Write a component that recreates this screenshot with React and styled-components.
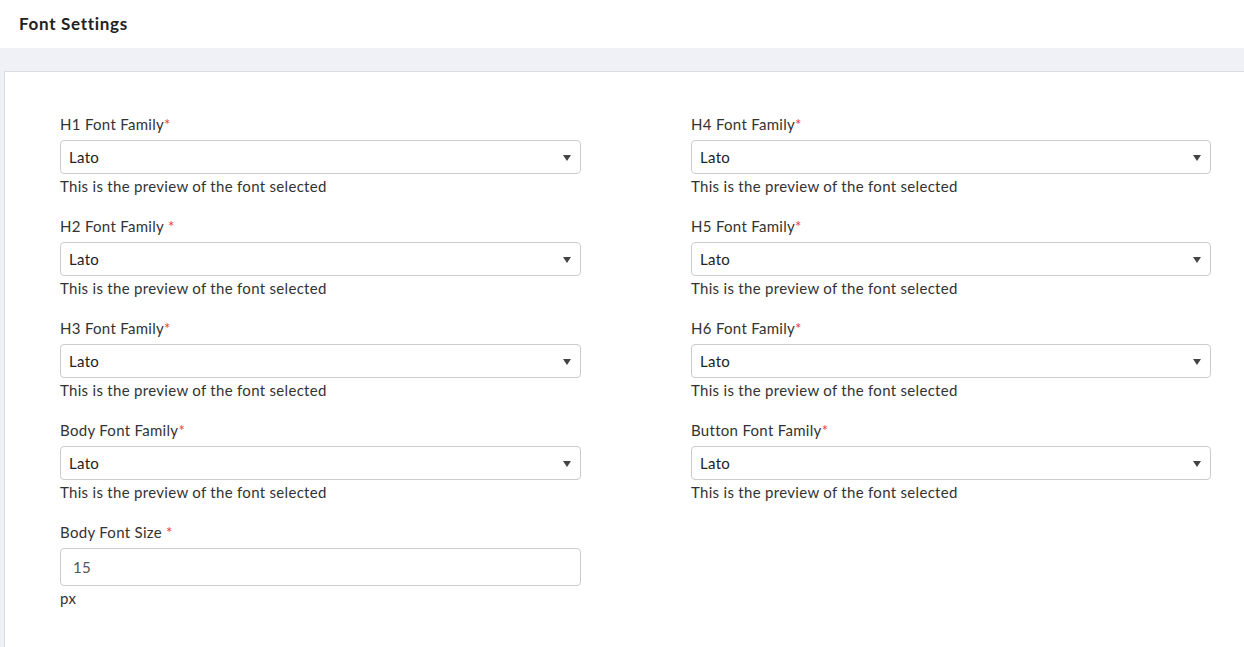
import React from "react";
import styled, { createGlobalStyle } from "styled-components";

const Global = createGlobalStyle`
  html, body { margin: 0; padding: 0; background: #f0f1f6; }
  body { font-family: Lato, "Noto Sans", sans-serif; color: #333; }
  * { box-sizing: border-box; }
`;

const Header = styled.div`
  height: 48px;
  background: #fff;
  display: flex;
  align-items: center;
  padding-left: 19px;
  padding-bottom: 2px;
`;

const Title = styled.h1`
  margin: 0;
  font-size: 17px;
  letter-spacing: 0.7px;
  font-weight: 700;
  color: #222;
`;

const Page = styled.div`
  padding: 23px 0 0 4px;
`;

const Card = styled.div`
  background: #fff;
  border: 1px solid #dcdde2;
  border-right: none;
  border-bottom: none;
  min-height: 577px;
  padding: 41px 0 30px 55px;
`;

const Grid = styled.div`
  display: grid;
  grid-template-columns: 521px 520px;
  column-gap: 110px;
  align-items: start;
`;

const Field = styled.div`
  display: flex;
  flex-direction: column;
  margin-bottom: 17px;
`;

const Label = styled.label`
  font-size: 15px;
  letter-spacing: 0.3px;
  line-height: 22px;
  margin-bottom: 5px;
  color: #333;
`;

const Req = styled.span`
  color: #e8383d;
`;

const SelectBox = styled.div`
  height: 34px;
  border: 1px solid #ccc;
  border-radius: 4px;
  display: flex;
  align-items: center;
  justify-content: space-between;
  padding: 0 9px 0 8px;
  font-size: 15px;
  letter-spacing: 0.3px;
  color: #222;
  background: #fff;
`;

const InputBox = styled.div`
  height: 38px;
  border: 1px solid #ccc;
  border-radius: 4px;
  display: flex;
  align-items: center;
  padding: 0 12px;
  font-size: 15px;
  letter-spacing: 0.3px;
  color: #555;
  background: #fff;
`;

const Hint = styled.div`
  font-size: 15px;
  letter-spacing: 0.3px;
  line-height: 24px;
  color: #333;
`;

const Arrow = () => (
  <svg width="8" height="6" viewBox="0 0 8 6" style={{ marginTop: 1 }}>
    <path d="M0 0 H8 L4 6 Z" fill="#444" />
  </svg>
);

const FontField = ({ label, space }) => (
  <Field>
    <Label>
      {label}
      {space ? " " : ""}
      <Req>*</Req>
    </Label>
    <SelectBox>
      <span>Lato</span>
      <Arrow />
    </SelectBox>
    <Hint>This is the preview of the font selected</Hint>
  </Field>
);

const Column = styled.div`
  display: flex;
  flex-direction: column;
`;

export default function App() {
  return (
    <>
      <Global />
      <Header>
        <Title>Font Settings</Title>
      </Header>
      <Page>
        <Card>
          <Grid>
            <Column>
              <FontField label="H1 Font Family" />
              <FontField label="H2 Font Family" space />
              <FontField label="H3 Font Family" />
              <FontField label="Body Font Family" />
              <Field>
                <Label>
                  Body Font Size <Req>*</Req>
                </Label>
                <InputBox>15</InputBox>
                <Hint>px</Hint>
              </Field>
            </Column>
            <Column>
              <FontField label="H4 Font Family" />
              <FontField label="H5 Font Family" />
              <FontField label="H6 Font Family" />
              <FontField label="Button Font Family" />
            </Column>
          </Grid>
        </Card>
      </Page>
    </>
  );
}
